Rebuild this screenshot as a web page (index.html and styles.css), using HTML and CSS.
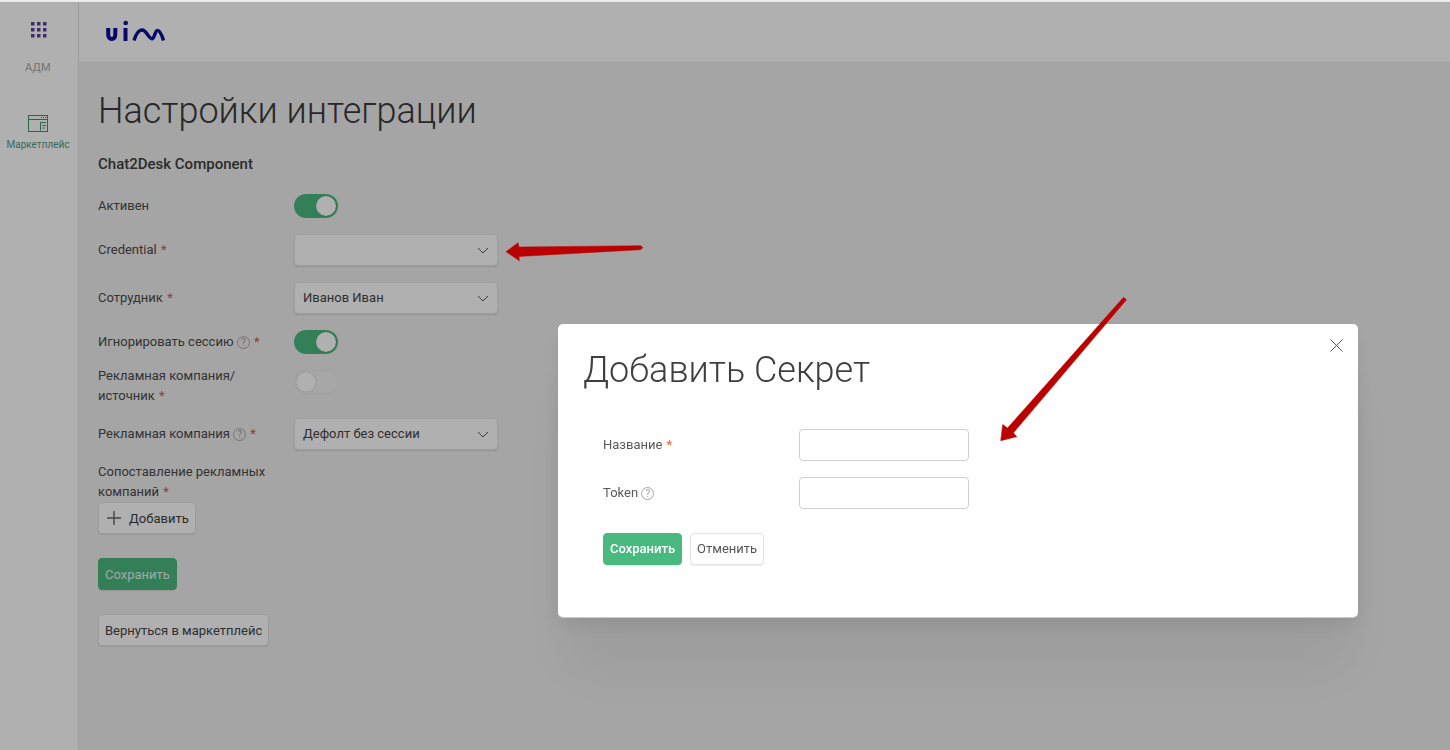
FILE: index.html
```html
<!DOCTYPE html>
<html lang="ru">
<head>
<meta charset="utf-8">
<title>Настройки интеграции</title>
<link rel="stylesheet" href="styles.css">
</head>
<body>
<div class="app">
  <aside class="sidebar">
    <div class="apps-icon">
      <svg width="16" height="16" viewBox="0 0 16 16"><g class="dots"><rect x="0" y="0" width="3.500" height="3.500"/><rect x="6" y="0" width="3.500" height="3.500"/><rect x="12" y="0" width="3.500" height="3.500"/><rect x="0" y="6" width="3.500" height="3.500"/><rect x="6" y="6" width="3.500" height="3.500"/><rect x="12" y="6" width="3.500" height="3.500"/><rect x="0" y="12" width="3.500" height="3.500"/><rect x="6" y="12" width="3.500" height="3.500"/><rect x="12" y="12" width="3.500" height="3.500"/></g></svg>
    </div>
    <div class="account">АДМ</div>
    <div class="nav-item">
      <svg class="nav-icon" width="20" height="17" viewBox="0 0 20 17" fill="none"><rect x="0.5" y="0.5" width="19" height="16" stroke-width="1"/><path d="M1 4.5H19" stroke-width="1"/><path d="M13 2.5h1M15 2.5h1M17 2.5h1" stroke-width="1"/><path d="M12.5 15.5V7.5H18M14.5 10.500H18M14.500 13H17" stroke-width="1"/></svg>
      <span>Маркетплейс</span>
    </div>
  </aside>
  <div class="content">
    <header class="topbar">
      <svg class="logo" width="60" height="22" viewBox="0 0 60 22" fill="none"><path class="logo-bold" d="M3.200 8V14C3.200 17.500 4.500 19 6.800 19C9 19 10.300 17.500 10.300 14V8"/><path class="logo-bold" d="M20.500 8V21"/><circle class="logo-dot" cx="20.700" cy="3" r="2.300"/><path d="M29 20.500C31 14 33.500 10 37 10C42 10 43 18.700 47 18.700C49.500 18.700 50 10.500 52.500 10.500C55 10.500 57 15.500 58.500 20.500"/></svg>
    </header>
    <main class="main">
      <h1 class="page-title">Настройки интеграции</h1>
      <h2 class="section-title">Chat2Desk Component</h2>
      <div class="row">
        <label class="label">Активен</label>
        <span class="switch on"><i></i></span>
      </div>
      <div class="row">
        <label class="label">Credential <b>*</b></label>
        <div class="select"><span></span><svg class="chev" width="12" height="7" viewBox="0 0 12 7" fill="none"><path d="M1 1l5 5 5-5"/></svg></div>
      </div>
      <div class="row">
        <label class="label">Сотрудник <b>*</b></label>
        <div class="select"><span>Иванов Иван</span><svg class="chev" width="12" height="7" viewBox="0 0 12 7" fill="none"><path d="M1 1l5 5 5-5"/></svg></div>
      </div>
      <div class="row">
        <label class="label">Игнорировать сессию <em class="help">?</em> <b>*</b></label>
        <span class="switch on"><i></i></span>
      </div>
      <div class="row row-tall">
        <label class="label label-wrap">Рекламная компания/<br>источник <b>*</b></label>
        <span class="switch"><i></i></span>
      </div>
      <div class="row">
        <label class="label">Рекламная компания <em class="help">?</em> <b>*</b></label>
        <div class="select"><span>Дефолт без сессии</span><svg class="chev" width="12" height="7" viewBox="0 0 12 7" fill="none"><path d="M1 1l5 5 5-5"/></svg></div>
      </div>
      <div class="mapping">
        <label class="label">Сопоставление рекламных<br>компаний <b>*</b></label>
        <button class="btn btn-add"><svg width="14" height="14" viewBox="0 0 14 14" fill="none"><path d="M7 0v14M0 7h14"/></svg>Добавить</button>
      </div>
      <button class="btn btn-primary btn-save">Сохранить</button>
      <button class="btn btn-back">Вернуться в маркетплейс</button>
    </main>
  </div>
</div>

<div class="overlay">
  <section class="modal">
    <button class="close" aria-label="Закрыть"><svg width="13" height="13" viewBox="0 0 13 13" fill="none"><path d="M.5.5l12 12M12.500.5l-12 12"/></svg></button>
    <h2 class="modal-title">Добавить Секрет</h2>
    <div class="modal-row">
      <label class="modal-label">Название <b>*</b></label>
      <div class="input"></div>
    </div>
    <div class="modal-row">
      <label class="modal-label">Token <em class="help">?</em></label>
      <div class="input"></div>
    </div>
    <div class="modal-actions">
      <button class="btn btn-primary">Сохранить</button>
      <button class="btn btn-cancel">Отменить</button>
    </div>
  </section>
</div>

<svg class="arrows" width="1450" height="750" viewBox="0 0 1450 750">
  <polygon points="506,251.700 518,242.700 519,247 640.500,245.700 643,247.700 640.500,249.700 519,256.500 519.300,260.700"/>
  <polygon points="1000.700,440.700 1002.700,424.500 1007.500,428 1123.500,297.300 1126.500,299.700 1013.500,432.800 1016.700,436.700"/>
</svg>
</body>
</html>
```
FILE: styles.css
```css
* { box-sizing: border-box; }
html, body { margin: 0; padding: 0; height: 100%; overflow: hidden; }
body {
  background: #ececec;
  font-family: Roboto, "Noto Sans", sans-serif;
  font-size: 13px;
  color: #3c3c3c;
}
.app {
  display: flex;
  height: 750px;
  padding-top: 2px;
}
.sidebar {
  width: 79px;
  flex: none;
  background: #fff;
  border-right: 1px solid #e4e4e4;
  display: flex;
  flex-direction: column;
  align-items: center;
  padding-top: 20px;
}
.apps-icon { height: 16px; margin-right: 1px; }
.dots { fill: #5a4299; }
.account {
  margin-top: 23px;
  margin-right: 2px;
  font-size: 11px;
  line-height: 14px;
  letter-spacing: .3px;
  color: #a8a8a8;
}
.nav-item {
  margin-top: 40px;
  margin-right: 2px;
  display: flex;
  flex-direction: column;
  align-items: center;
  gap: 6px;
  font-size: 10px;
  line-height: 14px;
  color: #4f9a86;
}
.nav-icon { stroke: #2f9a66; }
.content { flex: 1; display: flex; flex-direction: column; min-width: 0; }
.topbar {
  height: 61px;
  flex: none;
  background: #fff;
  border-bottom: 1px solid #e6e6e6;
  padding: 18px 0 0 26px;
}
.logo { display: block; stroke: #0c0c9c; stroke-width: 3.400; }
.logo-bold { stroke-width: 4; }
.logo-dot { fill: #0c0c9c; stroke: none; }
.main { flex: 1; background: #f0f0f0; padding: 0 0 0 19px; display: flex; flex-direction: column; align-items: flex-start; }
.page-title {
  margin: 26px 0 0;
  font-size: 36px;
  font-weight: 300;
  line-height: 44px;
  color: #3a3a3a;
}
.section-title {
  margin: 21px 0 0;
  font-size: 15px;
  font-weight: 500;
  line-height: 20px;
  color: #3f3f3f;
}
.row { display: flex; align-items: center; margin-bottom: 16px; }
.section-title + .row { margin-top: 20px; }
.row-tall { align-items: flex-start; height: 32px; }
.label { width: 196px; flex: none; font-size: 13px; line-height: 20px; color: #4a4a4a; }
.label b { color: #d9534f; font-weight: 400; margin-left: 1px; }
.label-wrap { margin-top: -4px; }
.help {
  display: inline-block;
  width: 13px;
  height: 13px;
  border: 1px solid #a8a8a8;
  border-radius: 50%;
  font-size: 10px;
  line-height: 11px;
  text-align: center;
  font-style: normal;
  color: #a0a0a0;
  vertical-align: 0;
}
.switch {
  display: block;
  width: 44px;
  height: 24px;
  border-radius: 12px;
  background: #f2f2f2;
  box-shadow: inset 0 0 0 1px #e8e8e8;
  position: relative;
}
.switch i {
  position: absolute;
  left: 2px;
  top: 2px;
  width: 20px;
  height: 20px;
  border-radius: 50%;
  background: #fff;
  box-shadow: 0 0 1px rgba(0,0,0,.4);
}
.switch.on { background: #4ab97f; box-shadow: none; }
.switch.on i { left: 22px; }
.select {
  width: 204px;
  height: 32px;
  background: #fff;
  border: 1px solid #e6e6e6;
  border-radius: 4px;
  box-shadow: 0 1px 2px rgba(0,0,0,.12);
  display: flex;
  align-items: center;
  justify-content: space-between;
  padding: 0 8px;
  font-size: 13px;
  color: #454545;
}
.select span { margin-top: -2px; }
.chev { stroke: #555; stroke-width: 1; }
.mapping { margin-top: -4px; display: flex; flex-direction: column; align-items: flex-start; }
.btn {
  height: 32px;
  border-radius: 4px;
  font-family: inherit;
  font-size: 13px;
  background: #fff;
  border: 1px solid #e2e2e2;
  color: #444;
  padding: 0 6px;
  display: inline-flex;
  align-items: center;
  box-shadow: 0 1px 1px rgba(0,0,0,.08);
}
.btn-primary { background: #4ab97f; border-color: #4ab97f; color: #fff; font-weight: 500; }
.btn-add { gap: 8px; padding-left: 8px; color: #3e3e3e; }
.btn-add svg { stroke: #666; stroke-width: 1.400; }
.btn-save { margin-top: 24px; color: #e6f3ec; font-weight: 400; }
.btn-back { margin-top: 24px; }
.overlay {
  position: fixed;
  left: 0;
  right: 0;
  top: 2px;
  bottom: 0;
  background: rgba(0,0,0,.31);
  padding: 322px 0 0 558px;
}
.modal {
  position: relative;
  width: 800px;
  height: 293px;
  background: #fff;
  border-radius: 5px;
  box-shadow: 0 1px 0 #ccc, 0 8px 20px rgba(0,0,0,.08), 0 60px 60px rgba(0,0,0,.06);
  padding: 24px 0 0 25px;
}
.close {
  position: absolute;
  top: 15px;
  right: 15px;
  width: 13px;
  height: 13px;
  padding: 0;
  border: 0;
  background: none;
  line-height: 0;
}
.close svg { stroke: #555; stroke-width: 1; }
.modal-title {
  margin: 0 0 37px;
  font-size: 36px;
  font-weight: 300;
  line-height: 44px;
  color: #3f3f3f;
}
.modal-row { display: flex; align-items: center; margin-bottom: 16px; padding-left: 20px; }
.modal-label { width: 196px; flex: none; font-size: 13px; line-height: 20px; color: #5a5a5a; }
.modal-label b { color: #e8603c; font-weight: 400; margin-left: 1px; }
.input { width: 170px; height: 32px; border: 1px solid #d0d0d0; border-radius: 4px; background: #fff; }
.modal-actions { display: flex; gap: 8px; margin-top: 24px; padding-left: 20px; }
.modal-actions .btn { padding-bottom: 2px; }
.btn-cancel { color: #555; }
.arrows { position: fixed; left: 0; top: 0; pointer-events: none; }
.arrows polygon { fill: #bb0000; stroke: #bb0000; stroke-width: .5; stroke-linejoin: round; }
```
